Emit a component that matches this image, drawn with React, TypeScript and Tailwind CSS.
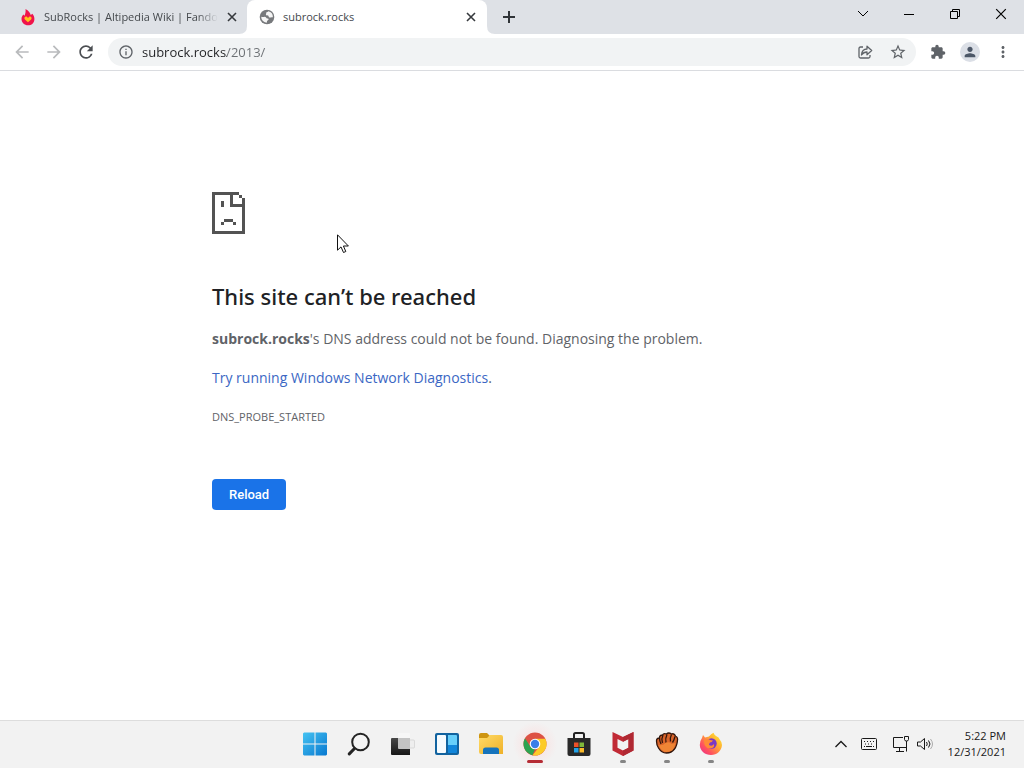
import React from 'react';
import { MdArrowBack, MdArrowForward, MdRefresh, MdInfoOutline, MdStarBorder, MdExtension, MdPerson, MdMoreVert } from 'react-icons/md';

const SadPage = () => (
  <svg viewBox="0 0 11 14" className="h-[42px] w-[33px]" fill="#535353" shapeRendering="crispEdges" aria-hidden="true">
    <path d="M0 0h9v1H7v3h3V2h1v12H0zM1 1v12h9V5H6V1zM9 1h1v1H9zM3 3h1v2H3zM4 9h3v1H4zM3 10h1v1H3zM7 10h1v1H7z" fillRule="evenodd" />
  </svg>
);

const Cross = ({ className }: { className: string }) => (
  <svg viewBox="0 0 10 10" className={className} stroke="currentColor" fill="none" aria-hidden="true">
    <path d="M1 1l8 8M9 1l-8 8" />
  </svg>
);

const Flame = () => (
  <svg viewBox="0 0 16 18" className="h-[18px] w-4 shrink-0" aria-hidden="true">
    <path d="M5.500 1c3.600 2.200 5 4.200 5.200 6.100L12.400 5.800c1.200 1.500 2 3 2 5.100 0 4-2.800 6.400-6.400 6.400S1.500 14.700 1.500 11c0-1.800.8-3.200 1.800-4.400l1.200 1.200C5.600 5.600 5.800 3 5.500 1z" fill="#f0144b" />
    <path d="M8 14.200l-3.100-2.700c-1.300-1.500.2-3.600 2-2.700L8 9.900l1.200-1.100c1.700-.9 3.200 1.200 1.900 2.700z" fill="#ffc21c" />
  </svg>
);

const Globe = () => (
  <svg viewBox="0 0 16 16" className="h-4 w-4 shrink-0" aria-hidden="true">
    <circle cx="8" cy="8" r="7.300" fill="#77797c" />
    <path d="M2.200 7.800c1.200.3 2.500.2 3.600 0 1 .1 1.300.8 1.800 1.500.8.3 1.900 0 2.100 1-.2 1-1.500 1-1.700 2 0 .8-.1 1.300-.5 1.500A5.900 5.900 0 0 1 2.200 7.800zM9.200 2.300c-.3.900-1.300.9-2 1.300-.2.800.2 1.600-.4 2.200.8.700 1.900.5 2.600 1 .5.700 0 1.300.9 1.700 1 .3 1.800-.4 3.600-.3A5.900 5.900 0 0 0 9.200 2.300z" fill="#f5f5f5" />
  </svg>
);

const Share = () => (
  <svg viewBox="0 0 16 16" className="size-4" fill="none" stroke="#5f6368" strokeWidth="1.300" strokeLinejoin="round" aria-hidden="true">
    <path d="M6 3H3.500Q2 3 2 4.500v8Q2 14 3.500 14h8q1.500 0 1.500-1.500V11" />
    <path d="M4.500 11c.3-3.800 2.200-6 5.500-6V2.200L14.700 6.500 10 10.700V8c-2.400 0-4 .8-5.500 3z" />
  </svg>
);

const StartIcon = () => (
  <svg viewBox="0 0 24 24" className="size-6" aria-hidden="true">
    <defs>
      <linearGradient id="win" x1="0" y1="0" x2="1" y2="1" gradientUnits="objectBoundingBox">
        <stop stopColor="#45c3f2" /><stop offset="1" stopColor="#0878d0" />
      </linearGradient>
    </defs>
    <path d="M1 .5h10.500V11.500H0V1.500zM12.500.5H23l1 1v10H12.500zM0 12.500h11.500v11H1l-1-1zM12.500 12.500H24v10l-1 1H12.500z" fill="url(#win)" />
  </svg>
);

const SearchIcon = () => (
  <svg viewBox="0 0 24 24" className="size-6" fill="none" stroke="#242424" aria-hidden="true">
    <circle cx="13.500" cy="10" r="8.300" fill="#f5f5f5" strokeWidth="2" />
    <path d="M7.500 16.500L2.300 21.900" strokeWidth="3" strokeLinecap="round" />
  </svg>
);

const TaskView = () => (
  <svg viewBox="0 0 24 24" className="size-6" aria-hidden="true">
    <defs><linearGradient id="tv" x1="0" y1="0" x2="0" y2="1"><stop stopColor="#484848" /><stop offset="1" stopColor="#171717" /></linearGradient></defs>
    <rect x="17" y="8" width="6.500" height="8" rx="1" fill="#eeeeee" stroke="#d0d0d0" strokeWidth=".7" />
    <path d="M1 6h18v17H1q-1 0-1-1V7q0-1 1-1z" fill="url(#tv)" />
    <path d="M7 6h12v11H8q-1 0-1-1z" fill="#c3c3c3" />
    <path d="M7 1h11q1 0 1 1v4H7z" fill="#f7f7f7" />
  </svg>
);

const Widgets = () => (
  <svg viewBox="0 0 24 24" className="size-6" aria-hidden="true">
    <rect x="0" y="1" width="24" height="22" rx="2" fill="#12639f" />
    <rect x="2" y="3" width="9" height="18" rx="1" fill="#f6fbfe" />
    <path d="M13 3h8q1 0 1 1v9h-9z" fill="#67cffb" /><path d="M13 13h9v7q0 1-1 1h-8z" fill="#1186db" />
  </svg>
);

const Folder = () => (
  <svg viewBox="0 0 24 24" className="h-6 w-6" aria-hidden="true">
    <defs><linearGradient id="fold" x1="0" y1="0" x2="1" y2="1"><stop stopColor="#ffdb67" /><stop offset="1" stopColor="#efb129" /></linearGradient></defs>
    <path d="M0 3q0-2 2-2h6l3 3-3 3H0z" fill="#ce9511" />
    <path d="M0 6h8l3-3h11q2 0 2 2v17H2q-2 0-2-2z" fill="url(#fold)" />
    <path d="M4 22v-4q0-2.500 2.500-2.500h11Q20 15.500 20 18v4z" fill="#1674bc" />
  </svg>
);

const Chrome = () => (
  <svg viewBox="0 0 24 24" className="size-6" aria-hidden="true">
    <circle cx="12" cy="12" r="11.500" fill="#dd5144" />
    <path d="M2 6.300L7.600 15 12 17l-2.500 6.200A11.500 11.500 0 0 1 2 6.300z" fill="#2da451" />
    <path d="M12 6.800h10.300A11.500 11.500 0 0 1 9.500 23.200L16.500 14.600z" fill="#fccb28" />
    <circle cx="12" cy="12" r="5.300" fill="#fff" /><circle cx="12" cy="12" r="4.200" fill="#3b7ee8" />
  </svg>
);

const Store = () => (
  <svg viewBox="0 0 24 26" className="h-[26px] w-6" aria-hidden="true">
    <path d="M7 8V3.500Q7 2 8.500 2h7Q17 2 17 3.500V8" fill="none" stroke="#222" strokeWidth="2" />
    <path d="M.5 7h23v16q0 2-2 2h-19q-2 0-2-2z" fill="#292929" />
    <path d="M7 11.500h4.500V16H7z" fill="#ee5129" /><path d="M12.500 11.500H17V16h-4.500z" fill="#80b93b" />
    <path d="M7 17h4.500v4.500H7z" fill="#22a2e8" /><path d="M12.500 17H17v4.500h-4.500z" fill="#fbba28" />
  </svg>
);

const Shield = () => (
  <svg viewBox="0 0 24 24" className="size-6" aria-hidden="true">
    <path d="M1.500 0L12 5 22.500 0v18.500L12 24 1.500 18.500zM6.500 7v8.700l5.500 2.900 5.500-2.900V7L12 9.700z" fill="#c12a35" fillRule="evenodd" />
    <path d="M12 5l10.500-5v18.500L12 24v-5.400l5.500-2.900V7L12 9.700z" fill="#b02933" />
  </svg>
);

const Fist = () => (
  <svg viewBox="0 0 24 24" className="size-6" stroke="#30150c" strokeWidth="1.300" strokeLinejoin="round" aria-hidden="true">
    <path d="M1.500 9q0-3 3-3 0-3 3-3 1-2 4-1 2-2 5 0 3-1 4 2 2.500 1 2 4-.5 6-3 9-3 4-8 4-5 0-8-5-2-3-2-7z" fill="#d9642a" />
    <path d="M4.500 6q0 3 1.500 6M8 3q-2 4-.5 8M12 2.500q-2 4-1 8M16.500 2.500q-2 4-1 7M20 4.500q-1 4-2.500 6" fill="none" />
    <path d="M3.500 13q4 1 7-2 4-2 6 1l4-1q-1 5-3 7-3 2-6 2-5 0-8-7z" fill="#ef8535" stroke="none" />
  </svg>
);

const Firefox = () => (
  <svg viewBox="0 0 24 24" className="size-6" aria-hidden="true">
    <defs><linearGradient id="fox" x1="1" y1="0" x2="0" y2="1"><stop stopColor="#fff33f" /><stop offset=".35" stopColor="#ffb430" /><stop offset=".7" stopColor="#ff525e" /><stop offset="1" stopColor="#e72c91" /></linearGradient></defs>
    <path d="M3 6l1-3 2 2.500 4-1Q12 2 14.500.8q.5 2 2.500 3.200 3 1 4 4 2 2 2 5c-.5 6-5 10-11 10S1 19 .8 13Q.7 9 3 6z" fill="url(#fox)" />
    <circle cx="12.500" cy="11.500" r="5.200" fill="#7a38c4" />
    <path d="M5 8q4-2 6 0l3 .5q-1 2-3 2-1 1-1 2.500 3 2 5-1 1 4-4 4.500-6 0-6-8.500z" fill="#ff8b35" />
  </svg>
);

const apps = [
  { name: 'Start', icon: <StartIcon />, mark: '' },
  { name: 'Search', icon: <SearchIcon />, mark: '' },
  { name: 'Task view', icon: <TaskView />, mark: '' },
  { name: 'Widgets', icon: <Widgets />, mark: '' },
  { name: 'File Explorer', icon: <Folder />, mark: '' },
  { name: 'Google Chrome', icon: <Chrome />, mark: 'w-4 bg-[#b52c35]' },
  { name: 'Microsoft Store', icon: <Store />, mark: '' },
  { name: 'McAfee', icon: <Shield />, mark: 'w-1.5 bg-[#858585]' },
  { name: 'Fist', icon: <Fist />, mark: 'w-1.5 bg-[#858585]' },
  { name: 'Firefox', icon: <Firefox />, mark: 'w-1.5 bg-[#858585]' },
];

function TabStrip() {
  return (
    <header className="flex h-[34px] bg-[#dee1e6] text-[#45494d]">
      <div className="flex w-[247px] items-center pl-5 pr-[7px]">
        <Flame />
        <span className="ml-2 w-[174px] overflow-hidden whitespace-nowrap text-[11px] [mask-image:linear-gradient(to_right,black_88%,transparent)]">SubRocks | Altipedia Wiki | Fandom</span>
        <button aria-label="Close SubRocks tab" className="ml-auto flex size-4 shrink-0 items-center justify-center text-[#36393d]"><Cross className="size-2.5 stroke-[1.600]" /></button>
      </div>
      <div className="relative flex w-60 items-center rounded-t-lg bg-white pl-3 pr-2">
        <svg viewBox="0 0 8 8" className="absolute -left-2 bottom-0 size-2" aria-hidden="true"><path d="M8 0v8H0q8 0 8-8z" fill="#fff" /></svg>
        <svg viewBox="0 0 8 8" className="absolute -right-2 bottom-0 size-2" aria-hidden="true"><path d="M0 0v8h8Q0 8 0 0z" fill="#fff" /></svg>
        <Globe />
        <span className="ml-2 text-[11px]">subrock.rocks</span>
        <button aria-label="Close subrock.rocks tab" className="ml-auto flex size-4 items-center justify-center text-[#36393d]"><Cross className="size-2.5 stroke-[1.600]" /></button>
      </div>
      <button aria-label="New tab" className="ml-2 flex w-7 items-center justify-center text-[#303438]">
        <svg viewBox="0 0 12 12" className="size-3" stroke="currentColor" strokeWidth="2" aria-hidden="true"><path d="M6 0v12M0 6h12" /></svg>
      </button>
      <div className="ml-auto flex items-center pb-1.5 text-black">
        <button aria-label="Search tabs" className="flex w-[46px] justify-center"><svg viewBox="0 0 12 8" className="h-2 w-3" fill="none" stroke="currentColor" aria-hidden="true"><path d="M1 1l5 5 5-5" /></svg></button>
        <button aria-label="Minimize" className="flex w-[46px] justify-center"><svg viewBox="0 0 10 10" className="size-2.5" stroke="currentColor" aria-hidden="true"><path d="M0 5.500h10" /></svg></button>
        <button aria-label="Restore" className="flex w-[46px] justify-center"><svg viewBox="0 0 10 10" className="size-2.5" fill="none" stroke="currentColor" aria-hidden="true"><path d="M.5 2.500h7v7h-7zM2.500 2.500v-2h7v7h-2" /></svg></button>
        <button aria-label="Close" className="flex w-[46px] justify-center"><Cross className="size-3" /></button>
      </div>
    </header>
  );
}

function Toolbar() {
  return (
    <nav className="flex h-[37px] items-center border-b border-[#dadce0] pb-px pl-3 pr-3 text-[#5f6368]">
      <button aria-label="Back" className="text-[#b9bbbd]"><MdArrowBack className="size-5" /></button>
      <button aria-label="Forward" className="ml-3 text-[#b9bbbd]"><MdArrowForward className="size-5" /></button>
      <button aria-label="Reload page" className="ml-3"><MdRefresh className="size-5 text-[#4b4e52]" /></button>
      <div className="ml-3 flex h-7 min-w-0 flex-1 items-center rounded-full bg-[#f1f3f4] pl-2.5 pr-[9px]">
        <MdInfoOutline className="size-4 shrink-0" />
        <input aria-label="Address" defaultValue="subrock.rocks/2013/" className="ml-2 h-5 min-w-0 flex-1 bg-[linear-gradient(to_right,#202124_85px,#6b6f73_85px)] bg-clip-text text-[13px] leading-5 text-transparent caret-black outline-none" />
        <button aria-label="Share this page"><Share /></button>
        <button aria-label="Bookmark this tab" className="ml-4"><MdStarBorder className="size-[18px]" /></button>
      </div>
      <button aria-label="Extensions" className="ml-3.5"><MdExtension className="size-4" /></button>
      <button aria-label="Profile" className="ml-3.5 flex size-5 items-center justify-center rounded-full bg-[#dbdfe6]"><MdPerson className="size-4 text-[#4c5767]" /></button>
      <button aria-label="Menu" className="ml-3.5"><MdMoreVert className="size-[18px]" /></button>
    </nav>
  );
}

function Taskbar() {
  return (
    <footer className="grid h-12 grid-cols-[1fr_auto_1fr] border-t border-[#dddddd] bg-[#f2f2f2]">
      <div />
      <div className="flex pb-px pl-0.5">
        {apps.map((app) => (
          <button key={app.name} aria-label={app.name} className={app.name === 'Google Chrome' ? 'relative flex w-11 items-center justify-center bg-[radial-gradient(circle,#fbdddd,#f2f2f2_70%)]' : 'relative flex w-11 items-center justify-center'}>
            {app.icon}
            {app.mark && <span className={`absolute bottom-1 h-[3px] rounded-full ${app.mark}`} />}
          </button>
        ))}
      </div>
      <div className="flex items-center justify-end pb-0.5 pr-[18px] text-[#191919]">
        <button aria-label="Show hidden icons"><svg viewBox="0 0 12 8" className="h-2 w-3" fill="none" stroke="currentColor" strokeWidth="1.300" aria-hidden="true"><path d="M.5 7L6 1.500 11.500 7" /></svg></button>
        <button aria-label="Touch keyboard" className="ml-3.5"><svg viewBox="0 0 16 12" className="h-3 w-4" fill="none" stroke="currentColor" aria-hidden="true"><rect x=".5" y=".5" width="15" height="11" rx="1" /><path d="M3 3.500h1m2 0h1m2 0h1m2 0h1M4 6h1m2 0h1m2 0h1M3 8.500h1m1 0h6m1 0h1" /></svg></button>
        <button aria-label="Network" className="ml-4"><svg viewBox="0 0 16 16" className="size-4" fill="none" stroke="currentColor" aria-hidden="true"><path d="M10 1.500H.5v10H13M3 15.500h8M6.500 11.500v4M13.500 5v10.500M11.500.5h4v3q0 1.500-2 1.500t-2-1.500z" /></svg></button>
        <button aria-label="Volume" className="ml-2"><svg viewBox="0 0 16 14" className="h-3.5 w-4" fill="none" stroke="currentColor" aria-hidden="true"><path d="M.5 5h3L7.500 1.500v11L3.500 9h-3zM9.500 5q1.500 2 0 4M11.500 3.500q3 3.500 0 7" /><path d="M13.500 2q4 5 0 10" stroke="#aaa" /></svg></button>
        <button className="ml-[15px] text-right text-[11px] leading-4"><span className="block">5:22 PM</span><span className="block">12/31/2021</span></button>
      </div>
    </footer>
  );
}

export default function App() {
  return (
    <div className="relative flex min-h-screen flex-col bg-white font-['Open_Sans','Noto_Sans',sans-serif]">
      <TabStrip />
      <Toolbar />
      <main className="mx-auto w-full max-w-[600px] flex-1 pt-[121px] text-[14px] leading-6 text-[#5f6368]">
        <SadPage />
        <h1 className="mt-[46px] font-['Noto_Sans',sans-serif] text-[22px] font-medium leading-8 text-[#202124]">This site can’t be reached</h1>
        <p className="mt-[15px]"><strong>subrock.rocks</strong>'s DNS address could not be found. Diagnosing the problem.</p>
        <p className="mt-[15px]"><a href="#diagnostics" className="text-[#3b67c4]">Try running Windows Network Diagnostics</a>.</p>
        <p className="mt-[15px] text-[11px] leading-6">DNS_PROBE_STARTED</p>
        <button className="mt-[50px] h-[31px] rounded bg-[#1a73e8] px-[17px] font-['Roboto',sans-serif] text-[13px] font-medium text-white">Reload</button>
      </main>
      <Taskbar />
      <svg viewBox="0 0 12 20" className="pointer-events-none absolute left-[337px] top-[234px] h-5 w-3" fill="#fff" stroke="#111" aria-hidden="true"><path d="M.5.800v15.400L4 12.900l2.500 5.600 2.300-1L6.400 12h5z" /></svg>
    </div>
  );
}
